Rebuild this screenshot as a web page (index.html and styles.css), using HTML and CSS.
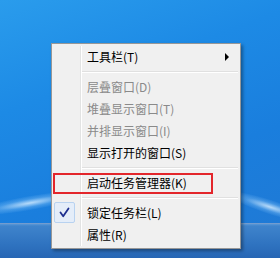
FILE: index.html
```html
<!DOCTYPE html>
<html lang="zh-CN">
<head>
<meta charset="utf-8">
<link rel="stylesheet" href="styles.css">
</head>
<body>
<div class="desktop">
  <div class="streak streak-left"></div>
  <div class="streak streak-right"></div>
</div>
<div class="taskbar"></div>

<div class="menu">
  <div class="list">
    <div class="item has-sub"><span class="label">工具栏(T)</span><span class="arrow"></span></div>
    <div class="sep"></div>
    <div class="item disabled"><span class="label">层叠窗口(D)</span></div>
    <div class="item disabled"><span class="label">堆叠显示窗口(T)</span></div>
    <div class="item disabled"><span class="label">并排显示窗口(I)</span></div>
    <div class="item"><span class="label">显示打开的窗口(S)</span></div>
    <div class="sep"></div>
    <div class="item marked"><span class="label">启动任务管理器(K)</span><span class="highlight"></span></div>
    <div class="sep"></div>
    <div class="item checked"><span class="check"><svg width="21" height="21" viewBox="0 0 21 21"><path d="M6.5 10.5 L9.2 14.2 L14.5 6.5" fill="none" stroke="#1d2f8f" stroke-width="1.8" stroke-linecap="round" stroke-linejoin="round"/></svg></span><span class="label">锁定任务栏(L)</span></div>
    <div class="item"><span class="label">属性(R)</span></div>
  </div>
</div>
</body>
</html>
```

FILE: styles.css
```css
html, body {
  margin: 0;
  padding: 0;
}
body {
  width: 280px;
  height: 258px;
  overflow: hidden;
  display: flex;
  flex-direction: column;
  position: relative;
  font-family: "Noto Sans CJK SC", "Noto Sans", sans-serif;
  font-size: 12px;
}
.desktop {
  flex: 1;
  position: relative;
  overflow: hidden;
  background: linear-gradient(160deg, #2a9cec 0%, #1d8ae5 35%, #1a7edd 70%, #1f7ad6 100%);
}
.streak {
  position: absolute;
  height: 14px;
  border-radius: 50%;
  background: radial-gradient(ellipse at center, rgba(210,235,255,0.85) 0%, rgba(140,200,250,0.35) 40%, rgba(40,140,230,0) 75%);
}
.streak-left {
  left: -30px;
  top: 196px;
  width: 120px;
  transform: rotate(-10deg);
}
.streak-right {
  left: 225px;
  top: 200px;
  width: 90px;
  transform: rotate(18deg);
}
.taskbar {
  height: 34px;
  background: linear-gradient(to bottom, #5b98d6 0px, #3f84cc 2px, #2f73c0 60%, #2766b4 100%);
  border-top: 1px solid rgba(255,255,255,0.35);
}
.menu {
  position: absolute;
  left: 51px;
  top: 43px;
  width: 190px;
  box-sizing: border-box;
  border: 1px solid #979797;
  background: #f0f0f0;
  padding: 2px;
  box-shadow: 2px 2px 3px rgba(0,0,0,0.35);
}
.list {
  background: linear-gradient(to right, transparent 26px, #e2e3e3 26px, #e2e3e3 27px, #ffffff 27px, #ffffff 28px, transparent 28px);
}
.item {
  position: relative;
  height: 22px;
  display: flex;
  align-items: center;
  padding-left: 33px;
  color: #000;
  line-height: 22px;
}
.item.disabled {
  color: #8a8a8a;
}
.label {
  flex: 1;
}
.arrow {
  width: 0;
  height: 0;
  border-left: 4px solid #000;
  border-top: 4px solid transparent;
  border-bottom: 4px solid transparent;
  margin-right: 9px;
}
.sep {
  height: 8px;
  margin-left: 28px;
  background: linear-gradient(to bottom, transparent 3px, #e0e0e0 3px, #e0e0e0 4px, #ffffff 4px, #ffffff 5px, transparent 5px);
}
.highlight {
  position: absolute;
  left: -1px;
  top: 1px;
  width: 160px;
  height: 21px;
  box-sizing: border-box;
  border: 2px solid #e3262b;
}
.check {
  position: absolute;
  left: 0;
  top: 0;
  width: 21px;
  height: 21px;
  box-sizing: border-box;
  border: 1px solid #b8d2f0;
  border-radius: 2px;
  background: #e4edf9;
  display: flex;
}
.check svg {
  margin: -1px;
}
```
